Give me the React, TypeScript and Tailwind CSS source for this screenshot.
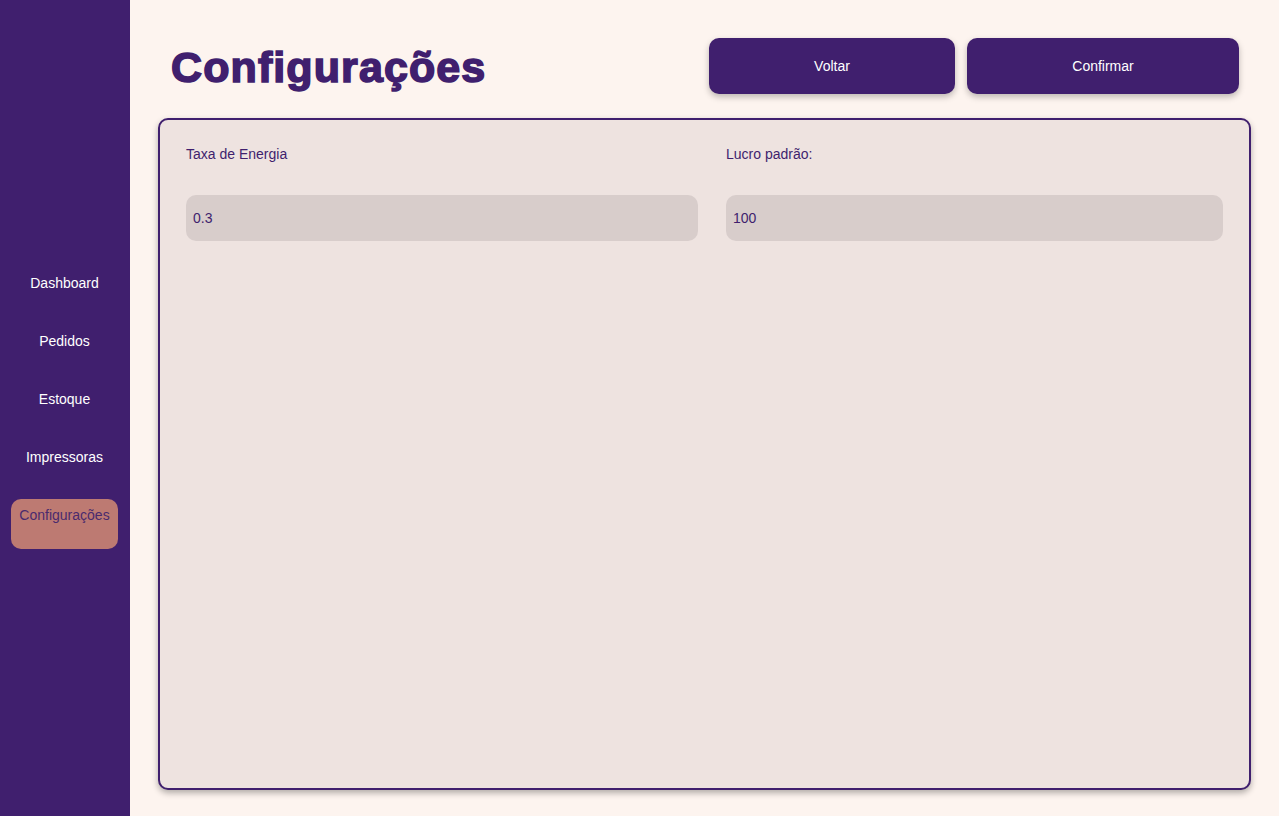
const navItems = ["Dashboard", "Pedidos", "Estoque", "Impressoras", "Configurações"];

export default function App() {
  const active = "Configurações";

  return (
    <div className="flex h-[816px] w-full bg-[#fdf4ef] font-['Liberation_Sans',Arial,sans-serif]">
      {/* Sidebar */}
      <aside className="flex w-[130px] shrink-0 flex-col bg-[#401f6e] pt-[267px] pl-[11px]">
        <nav className="flex flex-col gap-2">
          {navItems.map((item) => (
            <div
              key={item}
              className={
                item === active
                  ? "h-[50px] w-[107px] rounded-[10px] bg-[#bd7a72] pt-[6px] text-center text-[14px] text-[#4a2a6e]"
                  : "h-[50px] w-[107px] pt-[6px] text-center text-[14px] text-white"
              }
            >
              {item}
            </div>
          ))}
        </nav>
      </aside>

      {/* Main */}
      <main className="flex flex-1 flex-col pl-[28px] pr-[28px]">
        <header className="flex items-center justify-between pt-[38px] pl-[13px] pr-[12px]">
          <h1 className="mt-[3px] text-[43px] font-bold leading-none tracking-[1.1px] text-[#401f6e] [-webkit-text-stroke:1.6px_#401f6e]">
            Configurações
          </h1>
          <div className="flex gap-3">
            <button className="h-[56px] w-[246px] rounded-[10px] bg-[#401f6e] text-[14px] text-white shadow-[0_3px_6px_rgba(0,0,0,0.25)]">
              Voltar
            </button>
            <button className="h-[56px] w-[272px] rounded-[10px] bg-[#401f6e] text-[14px] text-white shadow-[0_3px_6px_rgba(0,0,0,0.25)]">
              Confirmar
            </button>
          </div>
        </header>

        <section className="mt-[24px] h-[672px] rounded-[10px] border-2 border-[#401f6e] bg-[#eee3e0] px-[26px] pt-[24px] shadow-[0_3px_6px_rgba(0,0,0,0.3)]">
          <div className="flex gap-[28px]">
            <div className="flex w-[512px] flex-col">
              <label className="text-[14px] text-[#401f6e]">Taxa de Energia</label>
              <input
                readOnly
                value="0.3"
                className="mt-[30px] h-[46px] rounded-[10px] bg-[#d8cdcb] px-[7px] text-[14px] text-[#401f6e] outline-none"
              />
            </div>
            <div className="flex flex-1 flex-col">
              <label className="text-[14px] text-[#401f6e]">Lucro padrão:</label>
              <input
                readOnly
                value="100"
                className="mt-[30px] h-[46px] rounded-[10px] bg-[#d8cdcb] px-[7px] text-[14px] text-[#401f6e] outline-none"
              />
            </div>
          </div>
        </section>
      </main>
    </div>
  );
}
